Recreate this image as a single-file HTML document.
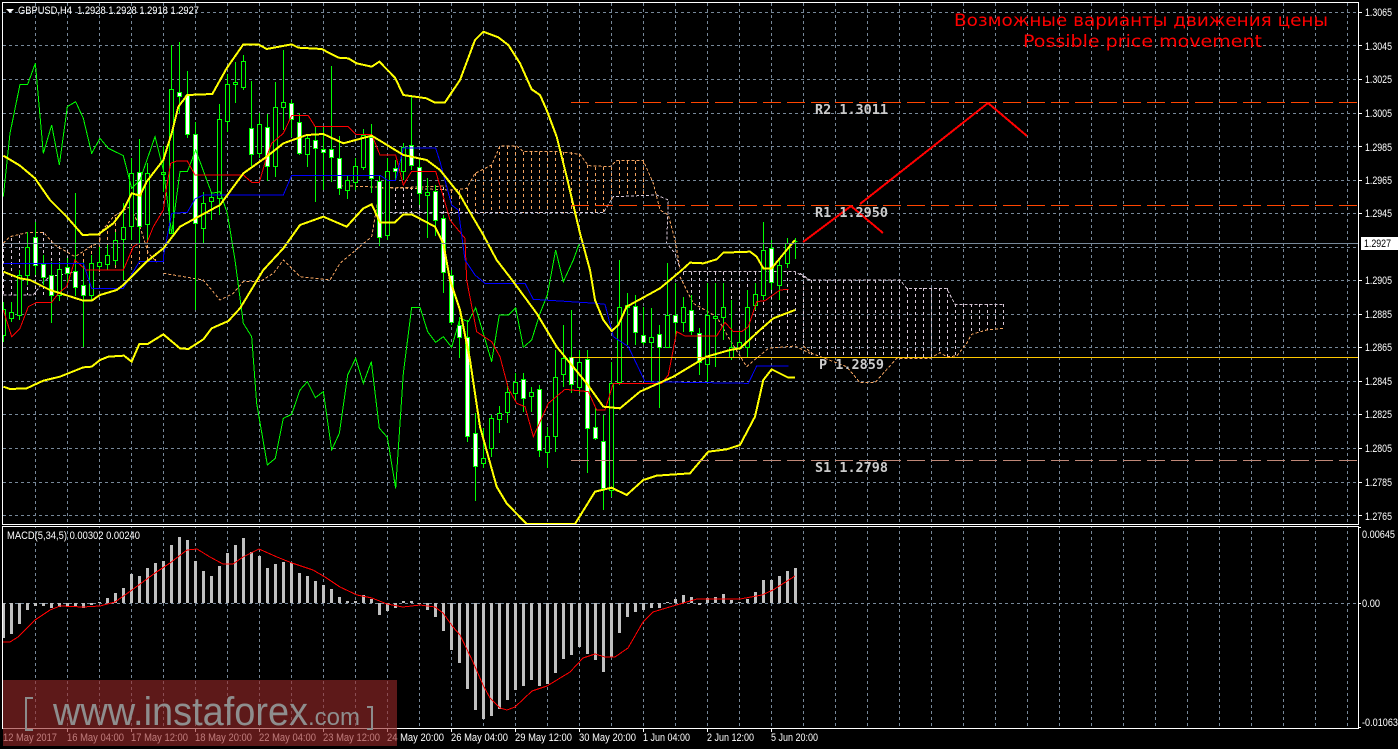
<!DOCTYPE html>
<html>
<head>
<meta charset="utf-8">
<title>GBPUSD H4</title>
<style>
html,body{margin:0;padding:0;background:#000;width:1398px;height:749px;overflow:hidden}
svg{display:block}
text{font-family:"Liberation Sans",sans-serif;font-size:11px;fill:#fff}
.c{shape-rendering:crispEdges;fill:none}
.y{stroke:#ff0;stroke-width:6}
.r{stroke:#f00;stroke-width:3}
.b{stroke:#00f;stroke-width:3}
.g{stroke:#0f0;stroke-width:3}
.p text{font-family:"DejaVu Sans Mono","Liberation Mono",monospace;font-size:13px;font-weight:bold;fill:#ccc}
</style>
</head>
<body>
<svg width="1398" height="749" viewBox="0 0 1398 749" xmlns="http://www.w3.org/2000/svg">
<defs>
<clipPath id="m"><rect x="3" y="3" width="1355" height="521"/></clipPath>
<clipPath id="n"><rect x="3" y="527" width="1355" height="201"/></clipPath>
<pattern id="v" x="35" y="3" width="32" height="6" patternUnits="userSpaceOnUse"><rect width="1" height="3" fill="#778899"/></pattern>
</defs>
<rect width="1398" height="749" fill="#000"/>

<!-- grid -->
<rect x="35" y="3" width="1323" height="521" fill="url(#v)"/>
<rect x="35" y="527" width="1323" height="201" fill="url(#v)"/>
<path class="c" stroke="#778899" stroke-dasharray="3 3" d="M3 12.5H1358M3 45.5H1358M3 79.5H1358M3 113.5H1358M3 146.5H1358M3 180.5H1358M3 213.5H1358M3 247.5H1358M3 280.5H1358M3 314.5H1358M3 347.5H1358M3 381.5H1358M3 414.5H1358M3 448.5H1358M3 482.5H1358M3 515.5H1358M3 603.5H1358"/>

<g clip-path="url(#m)">
<!-- cloud -->
<path class="c" stroke="#d8c8d8" stroke-dasharray="3 3" d="M3.5 243V295M11.5 238V295M19.5 235V295M27.5 233V295M35.5 232V295M43.5 232V295M51.5 240V293M59.5 246V290M67.5 250V285M379.5 188V213M387.5 188V213M395.5 188V213M403.5 188V213M411.5 187V213M419.5 187V213M427.5 187V213M435.5 187V213M443.5 187V213M683.5 272V277M691.5 272V298M699.5 272V310M707.5 272V313M715.5 272V316M723.5 272V323M731.5 272V332M739.5 272V343M747.5 272V345M755.5 272V345M763.5 272V345M771.5 272V345M779.5 272V345M787.5 272V345M795.5 272V345M803.5 275V345M811.5 280V357M819.5 280V357M827.5 280V357M835.5 280V357M843.5 280V357M851.5 280V357M859.5 280V357M867.5 280V357M875.5 280V357M883.5 280V357M891.5 280V357M899.5 280V357M907.5 288V357M915.5 288V357M923.5 288V357M931.5 288V357M939.5 288V353M947.5 288V357M955.5 304V356M963.5 304V348M971.5 304V335M979.5 304V332M987.5 304V330M995.5 304V328M1003.5 304V328"/>
<path class="c" stroke="#f4a460" stroke-dasharray="3 3" d="M75.5 257V283M83.5 253V280M91.5 245V275M99.5 233V272M107.5 225V270M115.5 217V270M123.5 212V268M131.5 207V268M139.5 227V264M147.5 245V262M155.5 253V262M451.5 190V213M459.5 190V213M467.5 188V213M475.5 173V213M483.5 170V213M491.5 165V213M499.5 146V213M507.5 146V213M515.5 146V213M523.5 152V213M531.5 152V213M539.5 152V213M547.5 152V213M555.5 152V213M563.5 152V213M571.5 152V213M579.5 154V213M587.5 165V213M595.5 167V213M603.5 167V213M611.5 167V200M619.5 161V197M627.5 161V195M635.5 161V195M643.5 161V195"/>
<g transform="translate(0 0) scale(.33333)" fill="none" shape-rendering="crispEdges" stroke-dasharray="9 6" stroke-width="3">
<polyline stroke="#f4a460" points="10,730 30,710 85,697 130,697 165,735 225,770 280,735 300,730 300,700 340,650 390,620 420,680 445,760 470,786"/>
<polyline stroke="#d8c8d8" points="10,885 100,885 130,845 150,830 230,815"/>
<polyline stroke="#f4a460" points="490,820 610,840 660,900 700,880 730,845 780,845 820,820 850,780 900,830 990,840 1020,790 1115,710 1140,565 1340,558"/>
<polyline stroke="#d8c8d8" points="1138,637 1340,637"/>
</g>
<g transform="translate(440 20) scale(.33333)" fill="none" shape-rendering="crispEdges" stroke-dasharray="9 6" stroke-width="3">
<polyline stroke="#f4a460" points="-300,497 35,510 80,505 105,460 155,435 180,378 230,378 250,395 360,395 420,403 445,437 510,440 530,422 610,422 640,490 660,570 685,585 705,660 720,745"/>
<polyline stroke="#d8c8d8" points="0,578 490,578 520,530 650,525 685,540 680,670 705,700 720,745"/>
</g>
<g transform="translate(440 260) scale(.33333)" fill="none" shape-rendering="crispEdges" stroke-dasharray="9 6" stroke-width="3">
<polyline stroke="#d8c8d8" points="730,35 1065,35 1090,50 1110,62"/>
<polyline stroke="#f4a460" points="720,50 760,130 830,170 870,240 920,320 985,265 1065,258 1110,280"/>
</g>
<g transform="translate(780 190) scale(.33333)" fill="none" shape-rendering="crispEdges" stroke-dasharray="9 6" stroke-width="3">
<polyline stroke="#d8c8d8" points="60,250 75,260 90,270 360,270 380,295 500,295 525,343 670,343"/>
<polyline stroke="#f4a460" points="70,468 95,490 200,530 240,578 285,578 310,550 350,505 450,505 480,488 500,500 530,498 560,460 575,433 620,420 670,415"/>
</g>

<!-- wicks -->
<path class="c" stroke="#0f0" d="M3.5 302V342M11.5 302V322M19.5 270V320M27.5 232V285M35.5 222V275M43.5 255V285M51.5 262V323M59.5 262V301M67.5 258V285M75.5 193V296M83.5 262V347M91.5 255V300M99.5 247V270M107.5 245V270M115.5 232V265M123.5 203V280M131.5 158V240M139.5 139V243M147.5 163V243M163.5 146V192M171.5 45V233M179.5 42V113M187.5 71V138M195.5 122V310M203.5 192V243M211.5 192V220M219.5 104V215M227.5 74V132M235.5 62V103M243.5 55V90M251.5 81V166M259.5 113V158M267.5 114V181M275.5 82V177M283.5 50V130M291.5 100V137M299.5 113V155M307.5 135V167M315.5 127V202M323.5 127V190M331.5 66V182M339.5 136V195M347.5 175V199M355.5 158V190M363.5 129V170M371.5 124V193M379.5 175V246M387.5 158V240M395.5 160V180M403.5 143V180M411.5 97V170M419.5 160V205M427.5 178V238M435.5 185V236M443.5 215V293M451.5 270V325M459.5 317V358M467.5 320V442M475.5 413V501M483.5 428V468M491.5 415V457M499.5 406V433M507.5 383V423M515.5 373V400M523.5 373V412M531.5 387V412M539.5 385V457M547.5 427V468M555.5 350V452M563.5 325V387M571.5 310V393M579.5 350V393M587.5 350V473M595.5 408V440M603.5 415V510M611.5 362V497M619.5 260V385M627.5 293V345M635.5 295V345M643.5 307V345M651.5 308V382M659.5 325V408M667.5 263V348M675.5 283V340M683.5 297V332M691.5 295V335M699.5 328V375M707.5 283V382M715.5 283V367M723.5 283V340M731.5 300V360M739.5 330V350M747.5 290V357M755.5 283V310M763.5 222V300M771.5 240V290M779.5 258V300M787.5 238V268M795.5 238V259"/>
<!-- hollow bodies -->
<path shape-rendering="crispEdges" fill="#000" stroke="#0f0" d="M1.5 309.5h4V335.5h-4zM9.5 312.5h4V318.5h-4zM17.5 275.5h4V315.5h-4zM25.5 247.5h4V275.5h-4zM57.5 269.5h4V295.5h-4zM89.5 263.5h4V295.5h-4zM97.5 262.5h4V266.5h-4zM105.5 255.5h4V264.5h-4zM113.5 240.5h4V260.5h-4zM121.5 227.5h4V239.5h-4zM129.5 173.5h4V226.5h-4zM145.5 173.5h4V224.5h-4zM161.5 172.5h4V174.5h-4zM169.5 89.5h4V233.5h-4zM201.5 203.5h4V228.5h-4zM209.5 197.5h4V201.5h-4zM217.5 119.5h4V198.5h-4zM225.5 84.5h4V121.5h-4zM233.5 82.5h4V84.5h-4zM241.5 61.5h4V87.5h-4zM257.5 124.5h4V153.5h-4zM273.5 107.5h4V166.5h-4zM281.5 102.5h4V107.5h-4zM305.5 138.5h4V154.5h-4zM345.5 180.5h4V190.5h-4zM353.5 166.5h4V182.5h-4zM361.5 135.5h4V167.5h-4zM385.5 171.5h4V235.5h-4zM401.5 147.5h4V171.5h-4zM425.5 192.5h4V195.5h-4zM481.5 458.5h4V463.5h-4zM489.5 418.5h4V448.5h-4zM497.5 413.5h4V419.5h-4zM505.5 392.5h4V412.5h-4zM513.5 382.5h4V393.5h-4zM529.5 392.5h4V396.5h-4zM545.5 436.5h4V452.5h-4zM553.5 377.5h4V436.5h-4zM561.5 358.5h4V374.5h-4zM577.5 362.5h4V387.5h-4zM609.5 383.5h4V490.5h-4zM617.5 307.5h4V382.5h-4zM625.5 305.5h4V307.5h-4zM649.5 337.5h4V342.5h-4zM665.5 315.5h4V347.5h-4zM681.5 307.5h4V322.5h-4zM705.5 315.5h4V364.5h-4zM713.5 316.5h4V318.5h-4zM721.5 307.5h4V317.5h-4zM729.5 347.5h4V357.5h-4zM737.5 342.5h4V348.5h-4zM745.5 307.5h4V347.5h-4zM753.5 294.5h4V305.5h-4zM761.5 250.5h4V295.5h-4zM777.5 265.5h4V285.5h-4zM785.5 243.5h4V263.5h-4zM793.5 241.5h4V241.5h-4z"/>
<!-- filled bodies -->
<path shape-rendering="crispEdges" fill="#fff" stroke="#0f0" d="M33.5 237.5h4V265.5h-4zM41.5 264.5h4V277.5h-4zM49.5 275.5h4V295.5h-4zM65.5 267.5h4V273.5h-4zM73.5 271.5h4V287.5h-4zM81.5 285.5h4V295.5h-4zM137.5 172.5h4V226.5h-4zM177.5 92.5h4V96.5h-4zM185.5 95.5h4V134.5h-4zM193.5 134.5h4V223.5h-4zM249.5 128.5h4V154.5h-4zM265.5 127.5h4V166.5h-4zM289.5 103.5h4V119.5h-4zM297.5 122.5h4V153.5h-4zM313.5 140.5h4V148.5h-4zM321.5 149.5h4V152.5h-4zM329.5 149.5h4V157.5h-4zM337.5 158.5h4V188.5h-4zM369.5 137.5h4V178.5h-4zM377.5 181.5h4V237.5h-4zM393.5 168.5h4V171.5h-4zM409.5 145.5h4V165.5h-4zM417.5 167.5h4V193.5h-4zM433.5 191.5h4V220.5h-4zM441.5 218.5h4V272.5h-4zM449.5 275.5h4V322.5h-4zM457.5 325.5h4V337.5h-4zM465.5 337.5h4V436.5h-4zM473.5 433.5h4V466.5h-4zM521.5 379.5h4V398.5h-4zM537.5 389.5h4V450.5h-4zM569.5 357.5h4V384.5h-4zM585.5 359.5h4V428.5h-4zM593.5 427.5h4V438.5h-4zM601.5 441.5h4V488.5h-4zM633.5 306.5h4V332.5h-4zM641.5 335.5h4V342.5h-4zM657.5 334.5h4V347.5h-4zM673.5 315.5h4V322.5h-4zM689.5 310.5h4V331.5h-4zM697.5 333.5h4V362.5h-4zM769.5 248.5h4V282.5h-4z"/>

<!-- ichimoku lines -->
<g transform="scale(.33333)">
<polyline class="c g" points="10,590 30,400 60,253 83,253 106,190 130,460 155,375 178,495 202,320 227,305 250,355 275,460 300,415 325,445 370,467 395,565 420,540 465,410 490,510 515,700 540,515 562,515 587,450 635,580 660,575 682,640 705,780 730,970 755,1010 770,1210 802,1395 826,1375 850,1255 875,1243 900,1170 922,1145 946,1193 970,1175 995,1350 1018,1300 1043,1125 1067,1075 1090,1150 1114,1085 1138,1285 1162,1312 1187,1465 1210,1120 1235,922 1260,922 1283,995 1307,1027 1330,1010 1355,1042 1380,955 1405,965 1427,923 1475,1085 1498,945 1525,945 1547,923 1570,1042 1595,1020 1620,940 1642,885 1667,750 1690,845 1720,780 1738,730 1760,730"/>
<polyline class="c r" points="10,930 35,1010 60,985 85,920 110,907 155,907 175,880 200,860 225,780 258,810 370,810 400,740 415,730 440,730 460,680 490,630 500,560 512,490 530,483 562,483 585,525 730,525 755,547 778,547 800,470 815,430 850,400 875,347 925,347 945,379 1043,379 1067,403 1115,403 1140,465 1187,465 1210,555 1235,514 1307,514 1330,590 1350,660 1395,715 1400,840 1430,995 1475,1025 1500,1070 1525,1165 1550,1210 1575,1220 1600,1310 1645,1210 1695,1168 1765,1175 1790,1230 1815,1230 1840,1150 1985,1150 2005,1125 2030,995 2055,1008 2150,1008 2175,967 2200,995 2225,995 2245,980 2270,905 2295,902 2340,870 2365,868"/>
<polyline class="c b" points="10,790 250,790 275,865 370,865 418,785 490,785 490,770 515,640 562,637 585,597 610,585 850,585 875,526 1140,526 1163,541 1187,541 1210,444 1307,444 1320,485 1355,615 1375,630 1395,780 1425,825 1455,850 1575,850 1600,898 1790,910 1815,913 1840,1010 1885,1040 1935,1145 2245,1150 2270,1098 2365,1098"/>
<polyline class="c y" points="10,467 60,497 105,535 150,600 200,650 248,705 295,703 340,670 370,630 395,580 420,587 440,545 490,480 515,400 535,320 562,285 637,282 680,205 730,133 775,133 800,147 875,133 895,143 965,147 1015,173 1045,175 1070,190 1115,200 1138,185 1185,233 1210,285 1280,295 1305,308 1330,308 1335,307 1380,240 1425,120 1450,95 1495,112 1525,135 1560,190 1595,268 1620,285 1640,330 1670,410 1700,530 1740,700 1770,810 1785,900 1810,960 1835,993 1855,975 1880,920 1980,865 2040,815 2070,788 2110,790 2150,778 2170,758 2250,755 2270,770 2290,805 2315,805 2360,750 2385,720"/>
<polyline class="c y" points="10,815 60,835 90,840 150,870 250,902 275,902 300,885 350,870 370,855 440,785 490,745 540,680 660,615 730,520 800,470 850,430 920,405 970,402 1030,430 1115,407 1140,422 1210,465 1280,480 1320,510 1380,585 1400,620 1450,705 1490,780 1540,845 1610,940 1670,1040 1760,1150 1810,1220 1860,1225 1920,1175 2020,1130 2120,1070 2190,1050 2220,1045 2280,990 2320,955 2385,930"/>
<polyline class="c y" points="10,1160 30,1167 80,1165 130,1142 180,1130 250,1102 275,1100 300,1080 325,1070 372,1067 395,1085 418,1032 443,1032 490,1003 540,1045 565,1047 610,1018 635,985 685,963 720,925 790,810 850,745 875,710 900,675 970,650 1040,680 1090,625 1115,613 1140,667 1185,667 1210,643 1235,643 1305,680 1330,730 1350,840 1380,930 1410,1080 1440,1280 1490,1460 1520,1510 1580,1572 1725,1572 1785,1475 1835,1463 1880,1485 1930,1440 1970,1427 2070,1420 2125,1355 2180,1348 2220,1335 2265,1250 2290,1140 2315,1108 2365,1133 2385,1133"/>
</g>

<!-- levels -->
<path class="c" stroke="#778899" d="M3 243.5H1358"/>
<path class="c" stroke="#ff4500" stroke-dasharray="18 6" d="M571 102.5H1358M571 205.5H1358"/>
<path class="c" stroke="#c08878" stroke-dasharray="18 6" d="M571 460.5H1358"/>
<path class="c" stroke="#ffc800" d="M571 357.5H1358"/>
<path class="c" stroke="#f00" stroke-width="2" d="M803 242L851 206L883 233M860 204L988 103L1027 136"/>
</g>

<!-- MACD -->
<g clip-path="url(#n)">
<path class="c" stroke="#c0c0c0" stroke-width="3" d="M3.5 603V638M11.5 603V634M19.5 603V624M27.5 603V610M35.5 603V606M43.5 603V606M51.5 603V608M59.5 603V607M67.5 603V606M75.5 603V607M83.5 603V608M91.5 603V605M99.5 603V602M107.5 603V598M115.5 603V593M123.5 603V588M131.5 603V574M139.5 603V576M147.5 603V568M155.5 603V563M163.5 603V561M171.5 603V545M179.5 603V537M187.5 603V540M195.5 603V561M203.5 603V571M211.5 603V576M219.5 603V566M227.5 603V553M235.5 603V545M243.5 603V538M251.5 603V552M259.5 603V556M267.5 603V568M275.5 603V564M283.5 603V562M291.5 603V563M299.5 603V573M307.5 603V576M315.5 603V581M323.5 603V585M331.5 603V589M339.5 603V597M347.5 603V601M355.5 603V601M363.5 603V595M371.5 603V599M379.5 603V615M387.5 603V611M395.5 603V608M403.5 603V601M411.5 603V601M419.5 603V604M427.5 603V610M435.5 603V617M443.5 603V631M451.5 603V650M459.5 603V663M467.5 603V689M475.5 603V710M483.5 603V719M491.5 603V716M499.5 603V709M507.5 603V700M515.5 603V690M523.5 603V686M531.5 603V680M539.5 603V686M547.5 603V684M555.5 603V673M563.5 603V659M571.5 603V655M579.5 603V647M587.5 603V654M595.5 603V660M603.5 603V672M611.5 603V657M619.5 603V633M627.5 603V617M635.5 603V612M643.5 603V610M651.5 603V608M659.5 603V608M667.5 603V602M675.5 603V599M683.5 603V595M691.5 603V597M699.5 603V605M707.5 603V598M715.5 603V597M723.5 603V594M731.5 603V600M739.5 603V602M747.5 603V599M755.5 603V592M763.5 603V580M771.5 603V580M779.5 603V576M787.5 603V571M795.5 603V568"/>
<polyline class="c" stroke="#f00" points="3,642 10,642 18,637 35,620 50,610 60,606 83,607 100,606 115,602 132,590 155,573 170,563 187,550 197,549 210,557 223,564 233,564 243,557 259,549 277,557 292,563 313,570 325,577 340,587 357,595 372,598 387,604 403,607 420,605 435,607 443,613 453,627 460,635 473,662 483,685 490,698 500,708 507,710 515,707 532,691 547,686 570,672 583,658 595,654 605,657 615,657 628,648 643,622 653,612 673,606 697,599 740,599 762,595 773,590 795,576"/>
</g>

<!-- frames -->
<rect class="c" x="2.5" y="2.5" width="1356" height="522" stroke="#fff"/>
<rect class="c" x="2.5" y="526.5" width="1356" height="202" stroke="#fff"/>
<path class="c" stroke="#fff" d="M1358 12.5h4M1358 45.5h4M1358 79.5h4M1358 113.5h4M1358 146.5h4M1358 180.5h4M1358 213.5h4M1358 280.5h4M1358 314.5h4M1358 347.5h4M1358 381.5h4M1358 414.5h4M1358 448.5h4M1358 482.5h4M1358 515.5h4M1358 603.5h3M1358 527.5h3M1358 727.5h3M67.5 728v4M131.5 728v4M195.5 728v4M259.5 728v4M323.5 728v4M387.5 728v4M451.5 728v4M515.5 728v4M579.5 728v4M643.5 728v4M707.5 728v4M771.5 728v4"/>

<!-- price labels -->
<g>
<text x="1365" y="16" textLength="27" lengthAdjust="spacingAndGlyphs">1.3065</text>
<text x="1365" y="50" textLength="27" lengthAdjust="spacingAndGlyphs">1.3045</text>
<text x="1365" y="83" textLength="27" lengthAdjust="spacingAndGlyphs">1.3025</text>
<text x="1365" y="117" textLength="27" lengthAdjust="spacingAndGlyphs">1.3005</text>
<text x="1365" y="151" textLength="27" lengthAdjust="spacingAndGlyphs">1.2985</text>
<text x="1365" y="184" textLength="27" lengthAdjust="spacingAndGlyphs">1.2965</text>
<text x="1365" y="217" textLength="27" lengthAdjust="spacingAndGlyphs">1.2945</text>
<text x="1365" y="284" textLength="27" lengthAdjust="spacingAndGlyphs">1.2905</text>
<text x="1365" y="318" textLength="27" lengthAdjust="spacingAndGlyphs">1.2885</text>
<text x="1365" y="351" textLength="27" lengthAdjust="spacingAndGlyphs">1.2865</text>
<text x="1365" y="385" textLength="27" lengthAdjust="spacingAndGlyphs">1.2845</text>
<text x="1365" y="418" textLength="27" lengthAdjust="spacingAndGlyphs">1.2825</text>
<text x="1365" y="452" textLength="27" lengthAdjust="spacingAndGlyphs">1.2805</text>
<text x="1365" y="486" textLength="27" lengthAdjust="spacingAndGlyphs">1.2785</text>
<text x="1365" y="520" textLength="27" lengthAdjust="spacingAndGlyphs">1.2765</text>
<rect x="1361" y="237" width="37" height="13" fill="#fff"/>
<text x="1364" y="247" textLength="27" lengthAdjust="spacingAndGlyphs" style="fill:#000">1.2927</text>
<text x="1362" y="538" textLength="33" lengthAdjust="spacingAndGlyphs">0.00645</text>
<text x="1362" y="607" textLength="18" lengthAdjust="spacingAndGlyphs">0.00</text>
<text x="1362" y="726" textLength="36" lengthAdjust="spacingAndGlyphs">-0.01063</text>
</g>

<!-- time labels -->
<g>
<text x="3" y="741" textLength="54" lengthAdjust="spacingAndGlyphs">12 May 2017</text>
<text x="67" y="741" textLength="57" lengthAdjust="spacingAndGlyphs">16 May 04:00</text>
<text x="131" y="741" textLength="57" lengthAdjust="spacingAndGlyphs">17 May 12:00</text>
<text x="195" y="741" textLength="57" lengthAdjust="spacingAndGlyphs">18 May 20:00</text>
<text x="259" y="741" textLength="57" lengthAdjust="spacingAndGlyphs">22 May 04:00</text>
<text x="323" y="741" textLength="57" lengthAdjust="spacingAndGlyphs">23 May 12:00</text>
<text x="387" y="741" textLength="57" lengthAdjust="spacingAndGlyphs">24 May 20:00</text>
<text x="451" y="741" textLength="57" lengthAdjust="spacingAndGlyphs">26 May 04:00</text>
<text x="515" y="741" textLength="57" lengthAdjust="spacingAndGlyphs">29 May 12:00</text>
<text x="579" y="741" textLength="57" lengthAdjust="spacingAndGlyphs">30 May 20:00</text>
<text x="643" y="741" textLength="47" lengthAdjust="spacingAndGlyphs">1 Jun 04:00</text>
<text x="707" y="741" textLength="47" lengthAdjust="spacingAndGlyphs">2 Jun 12:00</text>
<text x="771" y="741" textLength="47" lengthAdjust="spacingAndGlyphs">5 Jun 20:00</text>
</g>

<!-- chart titles -->
<path d="M6 9h8l-4 4z" fill="#fff"/>
<text x="18" y="14" textLength="181" lengthAdjust="spacingAndGlyphs" xml:space="preserve">GBPUSD,H4  1.2928 1.2928 1.2918 1.2927</text>
<text x="7" y="539" textLength="133" lengthAdjust="spacingAndGlyphs">MACD(5,34,5) 0.00302 0.00240</text>

<!-- annotations -->
<text x="954" y="26" textLength="374" lengthAdjust="spacingAndGlyphs" style="font-family:'DejaVu Sans','Liberation Sans',sans-serif;font-size:17px;fill:#f00">Возможные варианты движения цены</text>
<text x="1023" y="47" textLength="239" lengthAdjust="spacingAndGlyphs" style="font-family:'DejaVu Sans','Liberation Sans',sans-serif;font-size:17px;fill:#f00">Possible price movement</text>
<g class="p">
<text x="815" y="114" textLength="73" lengthAdjust="spacingAndGlyphs">R2 1.3011</text>
<text x="815" y="217" textLength="73" lengthAdjust="spacingAndGlyphs">R1 1.2950</text>
<text x="819" y="369" textLength="65" lengthAdjust="spacingAndGlyphs">P 1.2859</text>
<text x="815" y="472" textLength="73" lengthAdjust="spacingAndGlyphs">S1 1.2798</text>
</g>

<!-- watermark -->
<rect x="3" y="680" width="394" height="66" fill="rgb(150,40,40)" fill-opacity=".62"/>
<path fill="none" stroke="#8c8c8c" stroke-width="2" d="M33 698H26V730H33M367 707H372V729H367"/>
<text x="53" y="725" textLength="255" lengthAdjust="spacingAndGlyphs" style="font-size:40px;fill:#8e8e8e">www.instaforex</text>
<text x="308" y="725" textLength="52" lengthAdjust="spacingAndGlyphs" style="font-size:24px;fill:#8e8e8e">.com</text>
</svg>
</body>
</html>
